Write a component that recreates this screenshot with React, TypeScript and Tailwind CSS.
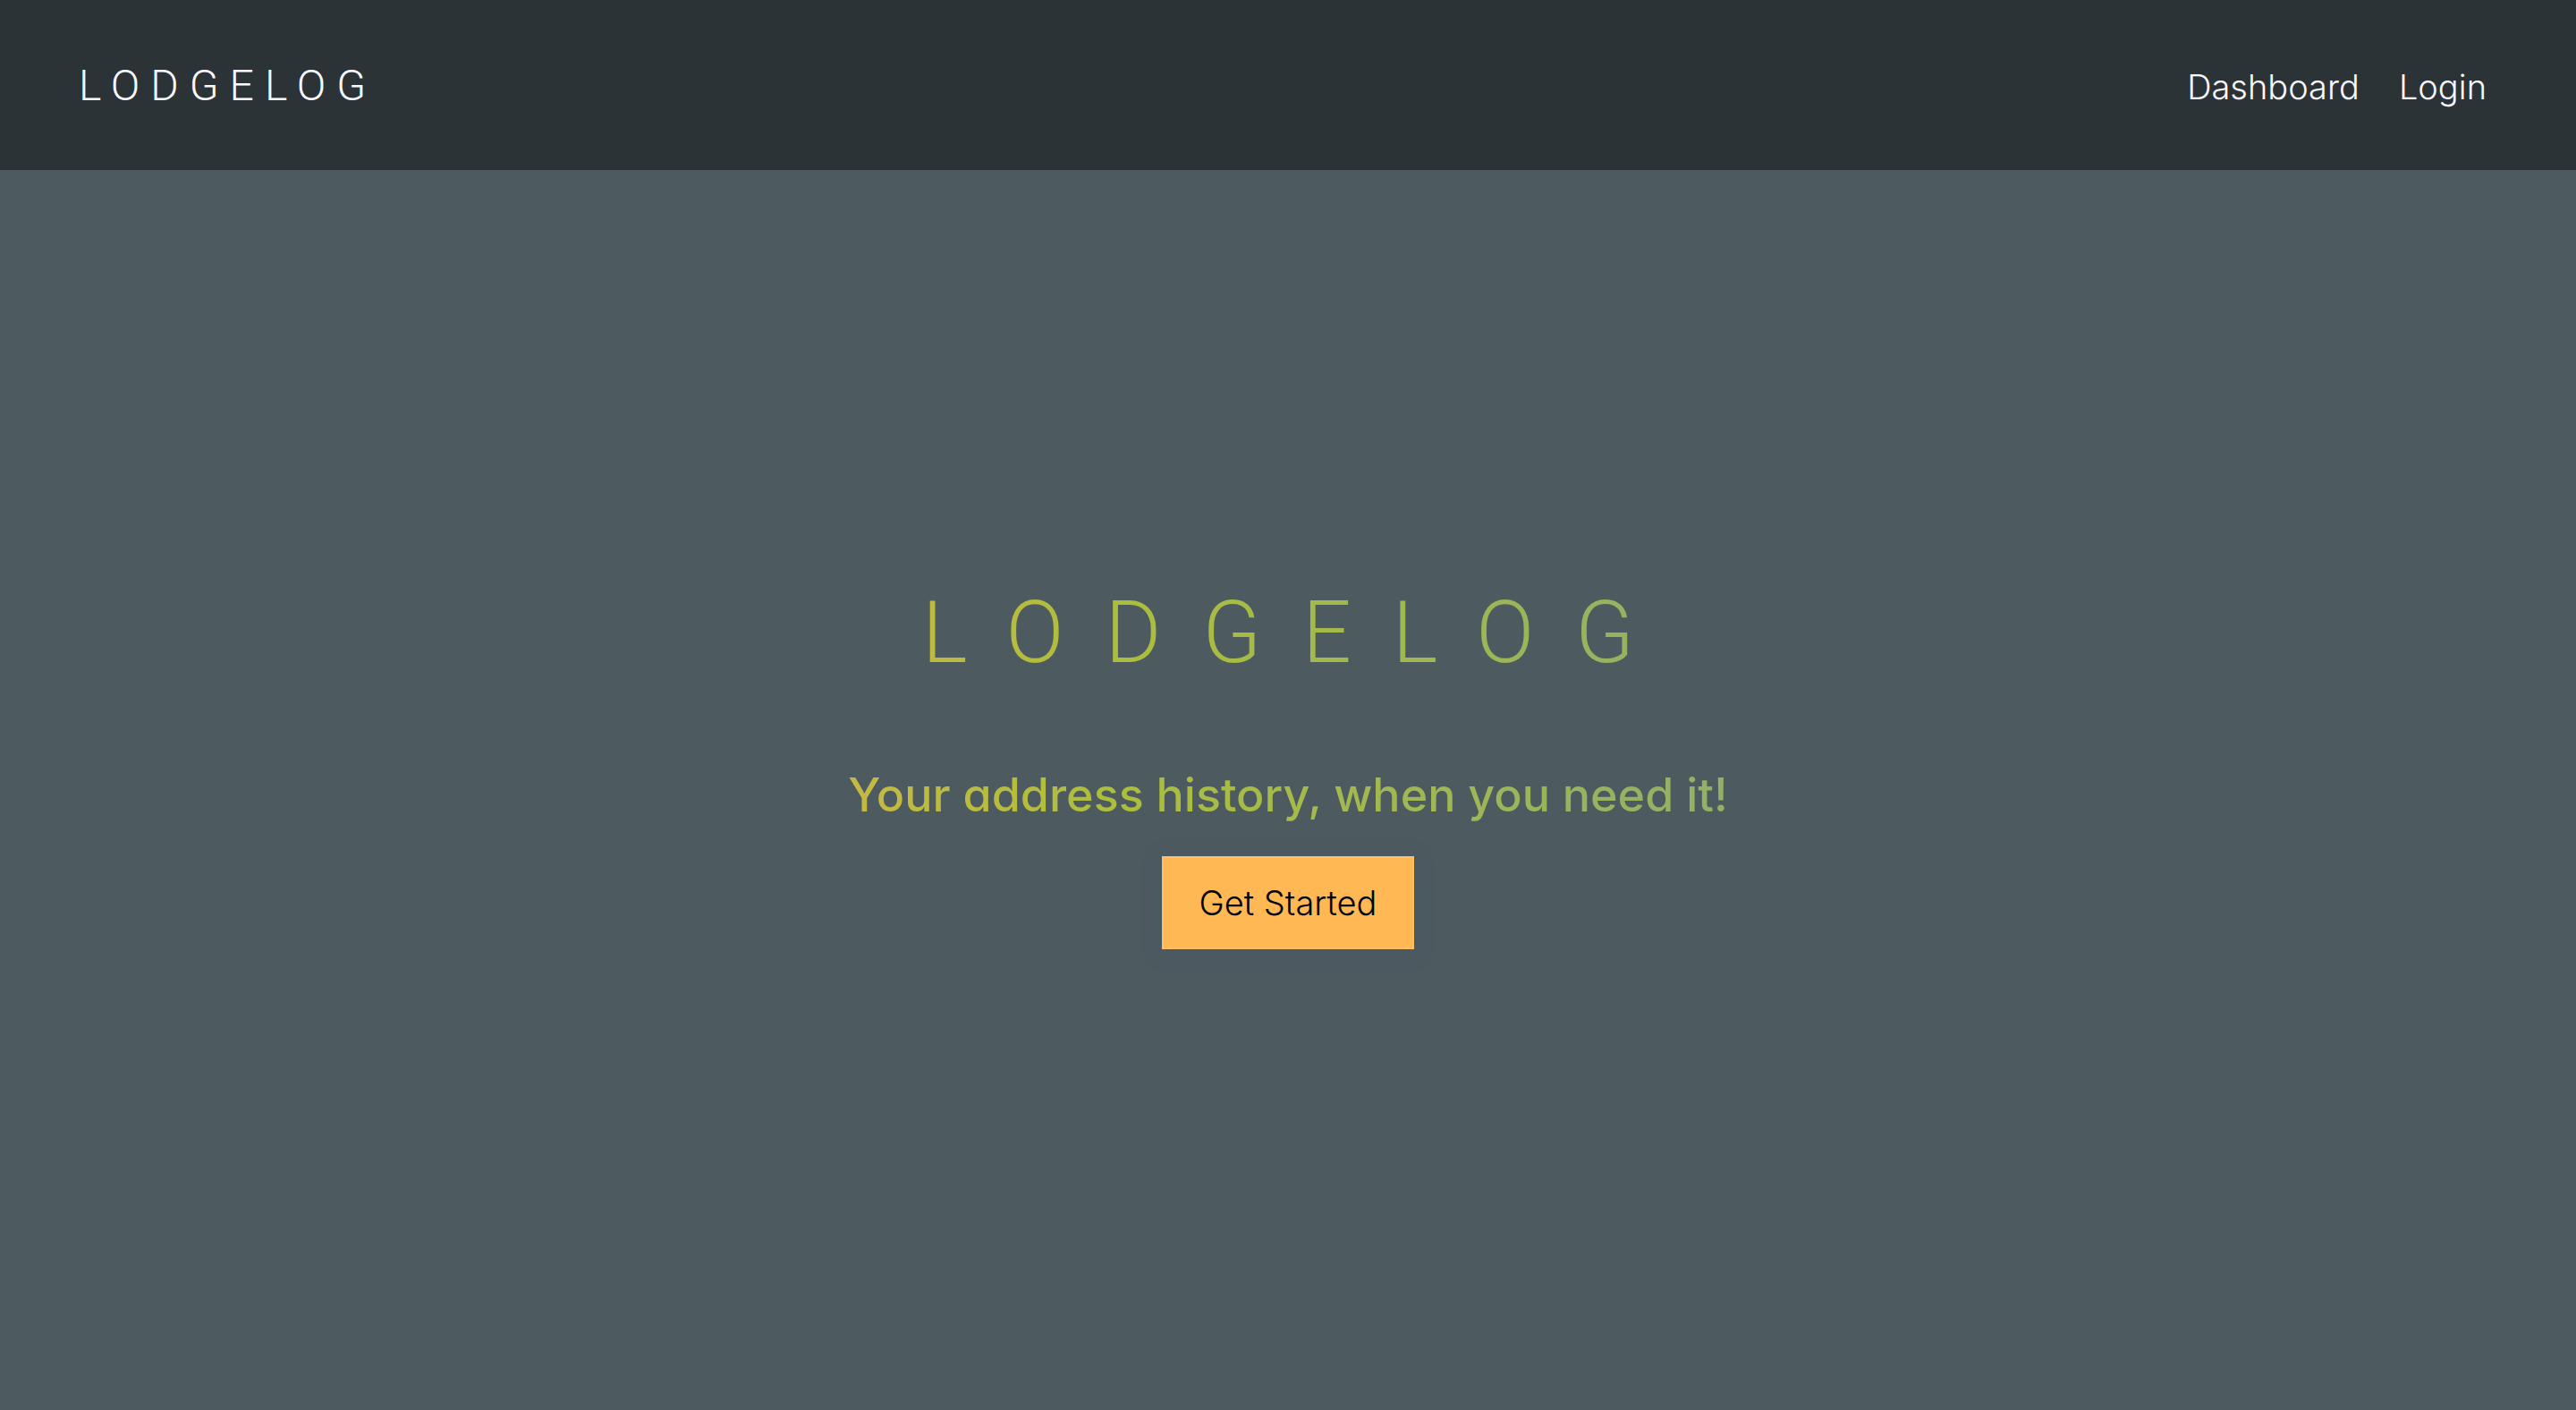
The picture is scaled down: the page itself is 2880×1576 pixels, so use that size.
export default function App() {
  return (
    <div className="flex min-h-screen flex-col bg-[#4d5a5f] font-['Inter',sans-serif]">
      <header className="flex items-start justify-between bg-[#2c3336] px-22 pt-16 pb-15">
        <a href="#home" className="font-['Roboto',sans-serif] text-5xl leading-[64px] font-light tracking-[0.25em] text-[#f8f8ff]">
          LODGELOG
        </a>
        <nav className="flex gap-11 pr-3">
          <a href="#dashboard" className="text-[38px] leading-[66px] font-light text-[#f8f8ff]">Dashboard</a>
          <a href="#login" className="text-[38px] leading-[66px] font-light text-[#f8f8ff]">Login</a>
        </nav>
      </header>
      <main className="flex flex-1 flex-col items-center justify-center pb-17">
        <div className="flex flex-col items-center bg-linear-to-r from-[#c4b944] via-[#acbe3b] via-30% to-[#93b065] bg-clip-text text-transparent">
          <h1 className="pl-6 font-['Roboto',sans-serif] text-8xl leading-[140px] font-light tracking-[46px]">LODGELOG</h1>
          <h2 className="mt-20 text-[52px] leading-[64px] font-medium [font-feature-settings:'cv11']">Your address history, when you need it!</h2>
        </div>
        <button className="mt-9 border-2 border-[#ffc067] bg-[#ffb854] px-10 py-7 text-[38px] leading-[44px] font-light text-black shadow-[0_4px_20px_rgba(70,88,110,0.4)]">
          Get Started
        </button>
      </main>
    </div>
  );
}
